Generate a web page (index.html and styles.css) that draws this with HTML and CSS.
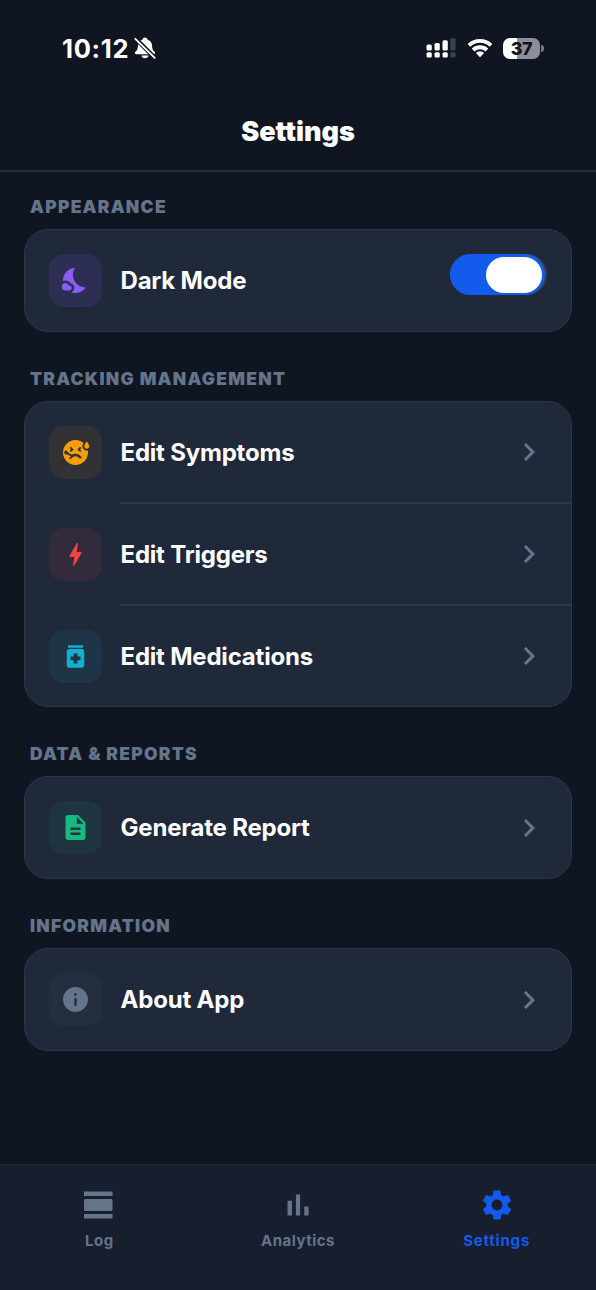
FILE: index.html
```html
<!DOCTYPE html>
<html lang="en">
<head>
  <meta charset="UTF-8">
  <meta name="viewport" content="width=device-width, initial-scale=1.0">
  <title>Settings</title>
  <link rel="stylesheet" href="styles.css">
</head>
<body>
  <div class="app">
    <div class="status-bar">
      <div class="status-left">
        <span class="time">10:12</span>
        <svg class="bell" viewBox="0 0 22 22">
          <path fill="#fff" d="M11 .5c1.300 0 2.200.8 2.400 2 2.900 1 4.500 3.200 4.600 6 .1 3.500.9 4.800 2.600 6.300 1 .9.4 2.400-.8 2.400H2.200c-1.200 0-1.800-1.500-.8-2.400C3.100 13.300 3.900 12 4 8.500c.1-2.800 1.700-5 4.600-6 .2-1.200 1.100-2 2.400-2zM7.500 18.500h7c-.3 1.700-1.700 2.800-3.500 2.800s-3.200-1.100-3.500-2.800z"/>
          <path stroke="#101621" stroke-width="4.400" d="M1 1l20 20"/>
          <path stroke="#fff" stroke-width="1.800" stroke-linecap="round" d="M1.300 1.800l19.400 19"/>
        </svg>
      </div>
      <div class="status-right">
        <svg class="signal" viewBox="0 0 30 22">
          <g fill="#fff">
            <rect x="0.500" y="7.500" width="5.300" height="6" rx="1.500"/>
            <rect x="8.500" y="6" width="5.300" height="7.500" rx="1.500"/>
            <rect x="16.500" y="3.300" width="5.300" height="10.200" rx="1.500"/>
            <rect x="0.500" y="15.300" width="5.300" height="5.300" rx="1.500"/>
            <rect x="8.500" y="15.300" width="5.300" height="5.300" rx="1.500"/>
            <rect x="16.500" y="15.300" width="5.300" height="5.300" rx="1.500"/>
          </g>
          <g fill="#3c414b">
            <rect x="24.300" y="1.300" width="5.300" height="12.200" rx="1.500"/>
            <rect x="24.300" y="15.300" width="5.300" height="5.300" rx="1.500"/>
          </g>
        </svg>
        <svg class="wifi" viewBox="0 0 26 20">
          <g fill="none" stroke="#fff" stroke-width="3.800">
            <path d="M2 7.300a15.800 15.800 0 0 1 22 0"/>
            <path d="M6.100 12a10 10 0 0 1 13.800 0"/>
          </g>
          <path fill="#fff" d="M13 19.300l-4.200-4.300a6 6 0 0 1 8.400 0z"/>
        </svg>
        <div class="battery"><span>37</span></div>
      </div>
    </div>

    <header class="header">
      <h1>Settings</h1>
    </header>

    <main class="content">
      <h2>Appearance</h2>
      <div class="card">
        <div class="row">
          <div class="icon purple">
            <svg viewBox="0 0 24 24"><path d="M11.100 12.080C8.770 7.570 10.600 3.600 11.630 2.010 6.270 2.200 1.980 6.590 1.980 12c0 .14.02.28.02.42.62-.27 1.290-.42 2-.42 1.660 0 3.180.83 4.100 2.150A4.014 4.014 0 0 1 11 18c0 1.520-.87 2.830-2.120 3.510.98.32 2.030.5 3.110.5 3.500 0 6.580-1.800 8.370-4.520-2.360.23-6.980-.97-9.260-5.410zM7 16h-.18C6.400 14.840 5.300 14 4 14c-1.660 0-3 1.340-3 3s1.340 3 3 3h3c1.100 0 2-.9 2-2s-.9-2-2-2z"/></svg>
          </div>
          <span class="label">Dark Mode</span>
          <div class="toggle"><div class="track"><div class="knob"></div></div></div>
        </div>
      </div>

      <h2>Tracking Management</h2>
      <div class="card group">
        <div class="row">
          <div class="icon orange">
            <svg viewBox="0 0 24 24"><path fill-rule="evenodd" d="M21 9c-1.100 0-2-.9-2-2 0-1.100 2-4 2-4s2 2.900 2 4c0 1.100-.9 2-2 2zM17.500 7c0-.73.41-1.710.92-2.660C16.680 2.880 14.440 2 11.990 2 6.470 2 2 6.480 2 12s4.470 10 9.990 10C17.520 22 22 17.520 22 12c0-.55-.06-1.090-.14-1.620-.28.07-.56.12-.86.12-1.930 0-3.500-1.570-3.500-3.500zM15.620 7.380l1.060 1.060-1.060 1.060 1.060 1.060-1.060 1.060L13.500 9.500l2.120-2.120zM7.320 8.440l1.060-1.060L10.500 9.500l-2.120 2.120-1.060-1.060L8.380 9.500 7.320 8.440zM15.440 17c-.69-1.190-1.970-2-3.440-2s-2.750.81-3.440 2H6.880c.3-.76.76-1.430 1.340-1.990L5.240 13.300c-.45.26-1.010.28-1.490 0a1.501 1.501 0 1 1 1.500-2.600c.48.28.74.78.74 1.290l2.970 1.720c.9-.45 1.940-.71 3.040-.71 2.330 0 4.320 1.450 5.120 3.500h-1.680z"/></svg>
          </div>
          <span class="label">Edit Symptoms</span>
          <svg class="chevron" viewBox="0 0 24 24"><path d="M10 6L8.590 7.410 13.170 12l-4.580 4.590L10 18l6-6z"/></svg>
        </div>
        <div class="divider"></div>
        <div class="row">
          <div class="icon red">
            <svg viewBox="0 0 24 24"><path d="M11 21h-1l1-7H7.500c-.58 0-.57-.32-.38-.66.19-.34.05-.08.07-.12C8.480 10.940 10.420 7.540 13 3h1l-1 7h3.500c.49 0 .56.33.47.51l-.07.15C12.960 17.550 11 21 11 21z"/></svg>
          </div>
          <span class="label">Edit Triggers</span>
          <svg class="chevron" viewBox="0 0 24 24"><path d="M10 6L8.590 7.410 13.170 12l-4.580 4.590L10 18l6-6z"/></svg>
        </div>
        <div class="divider"></div>
        <div class="row">
          <div class="icon cyan">
            <svg viewBox="0 0 24 24"><path d="M6 3h12v2H6zM17 6H7c-1.100 0-2 .9-2 2v11c0 1.100.9 2 2 2h10c1.100 0 2-.9 2-2V8c0-1.100-.9-2-2-2zm-1 9h-2.500v2.500h-3V15H8v-3h2.500V9.500h3V12H16v3z"/></svg>
          </div>
          <span class="label">Edit Medications</span>
          <svg class="chevron" viewBox="0 0 24 24"><path d="M10 6L8.590 7.410 13.170 12l-4.580 4.590L10 18l6-6z"/></svg>
        </div>
      </div>

      <h2>Data &amp; Reports</h2>
      <div class="card">
        <div class="row">
          <div class="icon green">
            <svg viewBox="0 0 24 24"><path d="M14 2H6c-1.100 0-1.990.9-1.990 2L4 20c0 1.100.89 2 1.990 2H18c1.100 0 2-.9 2-2V8l-6-6zm2 16H8v-2h8v2zm0-4H8v-2h8v2zm-3-5V3.500L18.500 9H13z"/></svg>
          </div>
          <span class="label">Generate Report</span>
          <svg class="chevron" viewBox="0 0 24 24"><path d="M10 6L8.590 7.410 13.170 12l-4.580 4.590L10 18l6-6z"/></svg>
        </div>
      </div>

      <h2>Information</h2>
      <div class="card">
        <div class="row">
          <div class="icon gray">
            <svg viewBox="0 0 24 24"><path d="M12 2C6.480 2 2 6.480 2 12s4.480 10 10 10 10-4.480 10-10S17.520 2 12 2zm1 15h-2v-6h2v6zm0-8h-2V7h2v2z"/></svg>
          </div>
          <span class="label">About App</span>
          <svg class="chevron" viewBox="0 0 24 24"><path d="M10 6L8.590 7.410 13.170 12l-4.580 4.590L10 18l6-6z"/></svg>
        </div>
      </div>
    </main>

    <nav class="tab-bar">
      <div class="tab">
        <svg viewBox="0 0 24 24"><path d="M2 21h19v-3H2v3zM20 8H3c-.55 0-1 .45-1 1v6c0 .55.45 1 1 1h17c.55 0 1-.45 1-1V9c0-.55-.45-1-1-1zM2 3v3h19V3H2z"/></svg>
        <span>Log</span>
      </div>
      <div class="tab">
        <svg viewBox="0 0 24 24"><path d="M5 9.200h3V19H5zM10.600 5h2.800v14h-2.800zM16.200 13H19v6h-2.800z"/></svg>
        <span>Analytics</span>
      </div>
      <div class="tab active">
        <svg viewBox="0 0 24 24"><path d="M19.140 12.940c.04-.3.06-.61.06-.94 0-.32-.02-.64-.07-.94l2.030-1.580c.18-.14.23-.41.12-.61l-1.920-3.320c-.12-.22-.37-.29-.59-.22l-2.390.96c-.5-.38-1.030-.7-1.620-.94L14.400 2.810c-.04-.24-.24-.41-.48-.41h-3.840c-.24 0-.43.17-.47.41L9.250 5.350c-.59.24-1.130.57-1.620.94l-2.390-.96c-.22-.08-.47 0-.59.22L2.740 8.870c-.12.21-.08.47.12.61l2.030 1.580c-.05.3-.09.63-.09.94s.02.64.07.94l-2.030 1.580c-.18.14-.23.41-.12.61l1.920 3.320c.12.22.37.29.59.22l2.390-.96c.5.38 1.030.7 1.620.94l.36 2.540c.05.24.24.41.48.41h3.840c.24 0 .44-.17.47-.41l.36-2.540c.59-.24 1.130-.56 1.620-.94l2.390.96c.22.08.47 0 .59-.22l1.920-3.320c.12-.22.07-.47-.12-.61l-2.010-1.580zM12 15.600c-1.980 0-3.600-1.620-3.600-3.600s1.620-3.600 3.600-3.600 3.600 1.620 3.600 3.600-1.620 3.600-3.600 3.600z"/></svg>
        <span>Settings</span>
      </div>
    </nav>
  </div>
</body>
</html>
```
FILE: styles.css
```css
* {
  box-sizing: border-box;
}

body {
  margin: 0;
  font-family: 'Inter', sans-serif;
  background-color: #101621;
  color: #fff;
}

svg {
  display: block;
  flex-shrink: 0;
}

.app {
  display: flex;
  flex-direction: column;
  height: 1290px;
}

/* Status bar */
.status-bar {
  display: flex;
  justify-content: space-between;
  align-items: center;
  height: 96px;
  padding: 0 52px 0 62px;
}

.status-left,
.status-right {
  display: flex;
  align-items: center;
}

.status-left {
  gap: 5px;
}

.time {
  font-size: 25.5px;
  font-weight: 700;
  letter-spacing: 0.7px;
}

.bell {
  width: 22px;
  height: 22px;
}

.signal {
  width: 30px;
  height: 22px;
  margin-right: 11px;
}

.wifi {
  width: 26px;
  height: 20px;
  margin-right: 10px;
}

.battery {
  position: relative;
  width: 37px;
  height: 21px;
  margin-right: 4px;
  border-radius: 7px;
  background: linear-gradient(to right, #fff 38%, #8d8f98 38%);
  color: #101621;
  font-size: 18px;
  font-weight: 800;
  line-height: 21px;
  letter-spacing: -0.5px;
  text-align: center;
}

.battery::after {
  content: '';
  position: absolute;
  right: -4px;
  top: 7px;
  width: 3px;
  height: 7px;
  border-radius: 0 3px 3px 0;
  background-color: #777a84;
}

/* Header */
.header {
  display: flex;
  justify-content: center;
  height: 76px;
  padding-top: 20px;
  border-bottom: 2px solid #232c3e;
}

.header h1 {
  margin: 0;
  font-size: 27px;
  font-weight: 900;
  line-height: 31px;
}

/* Settings list */
.content {
  flex: 1;
  padding: 0 24px;
}

.content h2 {
  margin: 0;
  height: 69px;
  padding: 36px 6px 0;
  color: #64748b;
  font-size: 17.5px;
  font-weight: 900;
  line-height: 22px;
  letter-spacing: 1.25px;
  text-transform: uppercase;
}

.content h2:first-child {
  height: 57px;
  padding-top: 24px;
}

.card {
  border: 1px solid #2b364a;
  border-radius: 24px;
  background-color: #1f293a;
}

.row {
  display: flex;
  align-items: center;
  height: 101px;
  padding: 0 24px;
}

.group .row {
  height: 100px;
}

.divider {
  height: 2px;
  margin-left: 95px;
  background-color: #2d384a;
}

.icon {
  display: flex;
  justify-content: center;
  align-items: center;
  width: 53px;
  height: 53px;
  margin-right: 18.5px;
  border-radius: 15px;
}

.icon svg {
  width: 31px;
  height: 31px;
  padding: 0.5px;
  fill: currentColor;
}

.purple {
  color: #8b5cf6;
  background-color: #2d2e53;
}

.orange {
  color: #f59e0b;
  background-color: #323234;
}

.red {
  color: #ef4444;
  background-color: #332b3b;
}

.cyan {
  color: #12b2cf;
  background-color: #1d3547;
}

.green {
  color: #18b981;
  background-color: #1e3540;
}

.gray {
  color: #64748b;
  background-color: #242e3f;
}

.label {
  flex: 1;
  font-size: 24px;
  font-weight: 650;
  letter-spacing: -0.2px;
}

.chevron {
  width: 36px;
  height: 36px;
  fill: #64748b;
}

.toggle {
  width: 97px;
  height: 41px;
  margin-bottom: 12px;
  border-radius: 21px;
  background-color: #334155;
}

.track {
  display: flex;
  justify-content: flex-end;
  align-items: center;
  width: 95px;
  height: 41px;
  padding-right: 3px;
  border-radius: 21px;
  background-color: #135bec;
}

.knob {
  width: 56px;
  height: 36px;
  border-radius: 18px;
  background-color: #fff;
}

/* Bottom navigation */
.tab-bar {
  display: grid;
  grid-template-columns: repeat(3, 1fr);
  height: 126px;
  border-top: 2px solid #1c2433;
  background-color: #171e2d;
}

.tab {
  display: flex;
  flex-direction: column;
  align-items: center;
  padding-top: 21px;
  color: #64748b;
  font-size: 15px;
  font-weight: 700;
  letter-spacing: 0.5px;
}

.tab svg {
  width: 36px;
  height: 36px;
  margin-bottom: 8px;
  fill: currentColor;
}

.tab.active {
  color: #135bec;
  letter-spacing: 0.8px;
}
```
